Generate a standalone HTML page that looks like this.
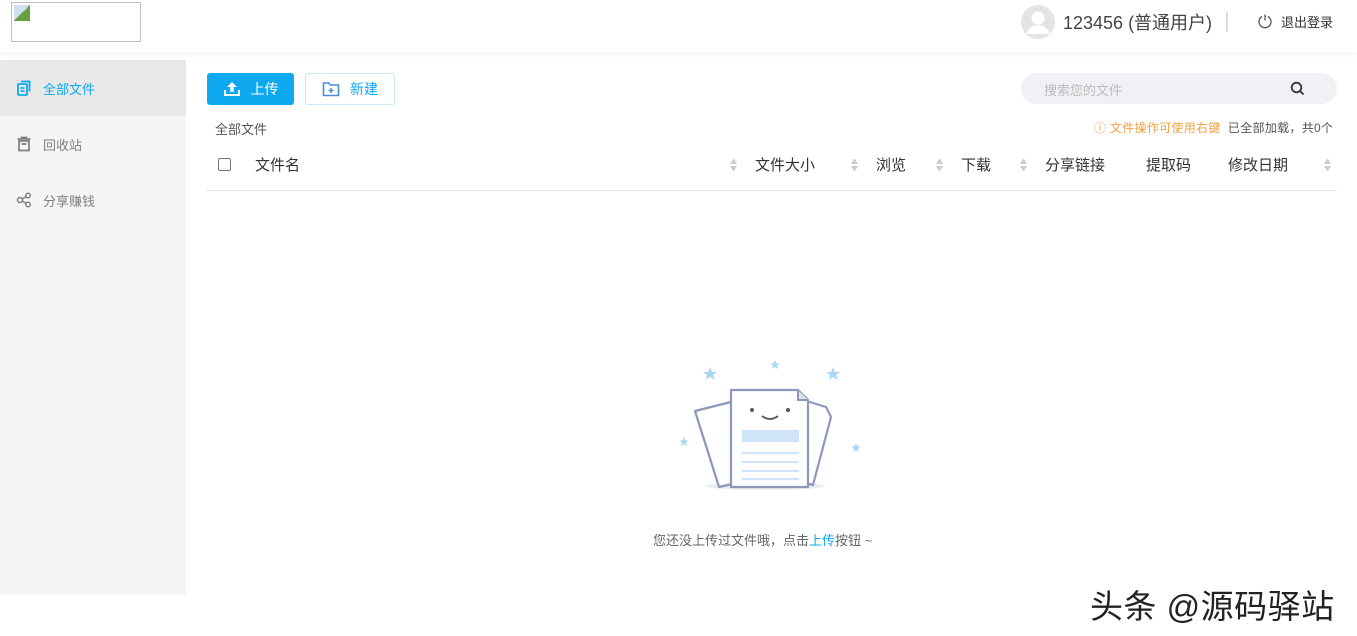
<!DOCTYPE html>
<html><head><meta charset="utf-8"><style>
*{margin:0;padding:0;box-sizing:border-box}
body{width:1357px;height:636px;overflow:hidden;background:#fff;font-family:"Liberation Sans","Noto Sans CJK SC",sans-serif;position:relative;color:#333}
.hdr{position:absolute;left:0;top:0;width:1357px;height:52px;background:#fff;box-shadow:0 2px 8px rgba(0,0,0,.05);z-index:2}
.logo{position:absolute;left:11px;top:2px;width:130px;height:40px;border:1px solid #c0c0c0}
.logo i{position:absolute;left:2px;top:2px;width:16px;height:16px;background:linear-gradient(135deg,#cfe0f0 50%,#6a9e40 50%)}
.side{position:absolute;left:0;top:60px;width:186px;height:535px;background:#f5f5f5}
.item{height:56px;display:flex;align-items:center;padding-left:16px;font-size:13px;color:#808080}
.item.on{background:#e8e8e8;color:#0fa9f0}
.item svg{margin-right:11px}
.abs{position:absolute;white-space:nowrap}
.btn{position:absolute;top:73px;height:32px;border-radius:3px;font-size:14px;display:flex;align-items:center;justify-content:center}
.th{position:absolute;top:154px;font-size:15px;color:#333}
.arr{position:absolute;top:159px;width:7px}
.arr:before,.arr:after{content:"";display:block;border-left:3.5px solid transparent;border-right:3.5px solid transparent}
.arr:before{border-bottom:5px solid #ccc;margin-bottom:2px}
.arr:after{border-top:5px solid #ccc}
</style></head><body>
<div class="hdr">
<div class="logo"><i></i></div>
<svg class="abs" style="left:1021px;top:5px" width="34" height="34"><circle cx="17" cy="17" r="17" fill="#e4e4e4"/><circle cx="17" cy="13" r="6.5" fill="#fff"/><path d="M5 29c3-7 8-9 12-9s9 2 12 9" fill="#fff"/></svg>
<div class="abs" style="left:1063px;top:9px;font-size:18px;color:#444">123456 (普通用户)</div>
<div class="abs" style="left:1226px;top:12px;width:2px;height:20px;background:#ddd"></div>
<svg class="abs" style="left:1257px;top:13px" width="16" height="16" fill="none" stroke="#555" stroke-width="1.3"><path d="M5 3.5A6 6 0 1 0 11 3.5"/><path d="M8 1.5v6"/></svg>
<div class="abs" style="left:1281px;top:12px;font-size:13px;color:#333">退出登录</div>
</div>
<div class="side">
<div class="item on"><svg width="16" height="16" fill="none" stroke="#0fa9f0" stroke-width="1.8"><rect x="2" y="4" width="9" height="11" rx="1"/><path d="M5 1.5h8.5v10"/><path d="M4.5 8h4M4.5 11h4"/></svg>全部文件</div>
<div class="item"><svg width="16" height="16" fill="none" stroke="#808080" stroke-width="1.8"><path d="M1.5 3h13M5.5 3V1.5h5V3"/><rect x="3" y="5" width="10" height="9.5"/><path d="M5.5 8h5"/></svg>回收站</div>
<div class="item"><svg width="16" height="16" fill="none" stroke="#808080" stroke-width="1.5"><circle cx="4" cy="8" r="2.5"/><circle cx="12" cy="3.5" r="2.3"/><circle cx="12" cy="12.5" r="2.3"/><path d="M6.2 7l3.7-2.3M6.2 9l3.7 2.3"/></svg>分享赚钱</div>
</div>
<div class="btn" style="left:207px;width:87px;background:#0fa9f0;color:#fff"><svg width="18" height="16" style="margin-right:10px" fill="#fff"><path d="M9 1l5 5h-3.3v5H7.3V6H4z"/><path d="M1 9h2v4h12V9h2v6H1z"/></svg>上传</div>
<div class="btn" style="left:305px;width:90px;border:1px solid #c8e8fa;color:#0fa9f0;background:#fff"><svg width="18" height="16" style="margin-right:10px" fill="none" stroke="#4a8de0" stroke-width="1.6"><path d="M1.5 2h5l2 2h8v10.5h-15z"/><path d="M9 7v5M6.5 9.5h5"/></svg>新建</div>
<div class="abs" style="left:1021px;top:73px;width:316px;height:31px;border-radius:16px;background:#f0f1f4"></div>
<div class="abs" style="left:1044px;top:80px;font-size:13px;color:#bbb">搜索您的文件</div>
<svg class="abs" style="left:1290px;top:81px" width="15" height="15" fill="none" stroke="#333" stroke-width="1.8"><circle cx="6.5" cy="6.5" r="4.8"/><path d="M10 10l3.5 3.5"/></svg>
<div class="abs" style="left:215px;top:119px;font-size:13px;color:#555">全部文件</div>
<div class="abs" style="left:1094px;top:119px;font-size:12px;color:#f0a040;letter-spacing:.3px">ⓘ 文件操作可使用右键 <span style="color:#555">&nbsp;已全部加载，共0个</span></div>
<div class="abs" style="left:218px;top:158px;width:13px;height:13px;border:1px solid #777;border-radius:2px"></div>
<div class="th" style="left:255px">文件名</div>
<div class="arr" style="left:730px"></div>
<div class="th" style="left:755px">文件大小</div>
<div class="arr" style="left:851px"></div>
<div class="th" style="left:876px">浏览</div>
<div class="arr" style="left:936px"></div>
<div class="th" style="left:961px">下载</div>
<div class="arr" style="left:1020px"></div>
<div class="th" style="left:1045px">分享链接</div>
<div class="th" style="left:1146px">提取码</div>
<div class="th" style="left:1228px">修改日期</div>
<div class="arr" style="left:1324px"></div>
<div class="abs" style="left:206px;top:190px;width:1131px;height:1px;background:#e2e2e2"></div>
<svg class="abs" style="left:670px;top:355px" width="200" height="140">
<ellipse cx="95" cy="131" rx="60" ry="4" fill="#eaedf2"/>
<g stroke="#8c98b8" stroke-width="2.2" fill="#fff" stroke-linejoin="round">
<path d="M25 56l48-12 20 78-44 10z"/>
<path d="M130 44l26 8 5 10-18 68-40-10z"/>
<path d="M61 35h67l10 10v87H61z"/>
</g>
<path d="M128 35v10h10" fill="#dde3ec" stroke="#8c98b8" stroke-width="2"/>
<rect x="72" y="75" width="57" height="12" fill="#cfe4f8"/>
<g stroke="#cfe4f8" stroke-width="2"><path d="M72 98h57M72 107h57M72 116h57M72 124h57"/></g>
<circle cx="82" cy="55" r="2" fill="#556"/><circle cx="118" cy="55" r="2" fill="#556"/>
<path d="M92 61q8 6 16 0" fill="none" stroke="#556" stroke-width="1.8"/>
<g fill="#a8d8f4"><path d="M40 12l2 5 5 0-4 3 2 5-5-3-4 3 1-5-4-3 5 0z"/><path d="M163 12l2 5 5 0-4 3 2 5-5-3-4 3 1-5-4-3 5 0z"/><path d="M105 5l1.5 3.5 3.5 0-3 2 1 3.5-3-2-3 2 1-3.5-3-2 3.5 0z"/><path d="M14 82l1.5 3.5 3.5 0-3 2 1 3.5-3-2-3 2 1-3.5-3-2 3.5 0z"/><path d="M186 88l1.5 3.5 3.5 0-3 2 1 3.5-3-2-3 2 1-3.5-3-2 3.5 0z"/></g>
</svg>
<div class="abs" style="left:653px;top:530px;font-size:13px;color:#666">您还没上传过文件哦，点击<span style="color:#0fa9f0">上传</span>按钮 ~</div>
<div class="abs" style="left:1090px;top:580px;font-size:33px;color:#222;letter-spacing:0.5px">头条 @源码驿站</div>
</body></html>
